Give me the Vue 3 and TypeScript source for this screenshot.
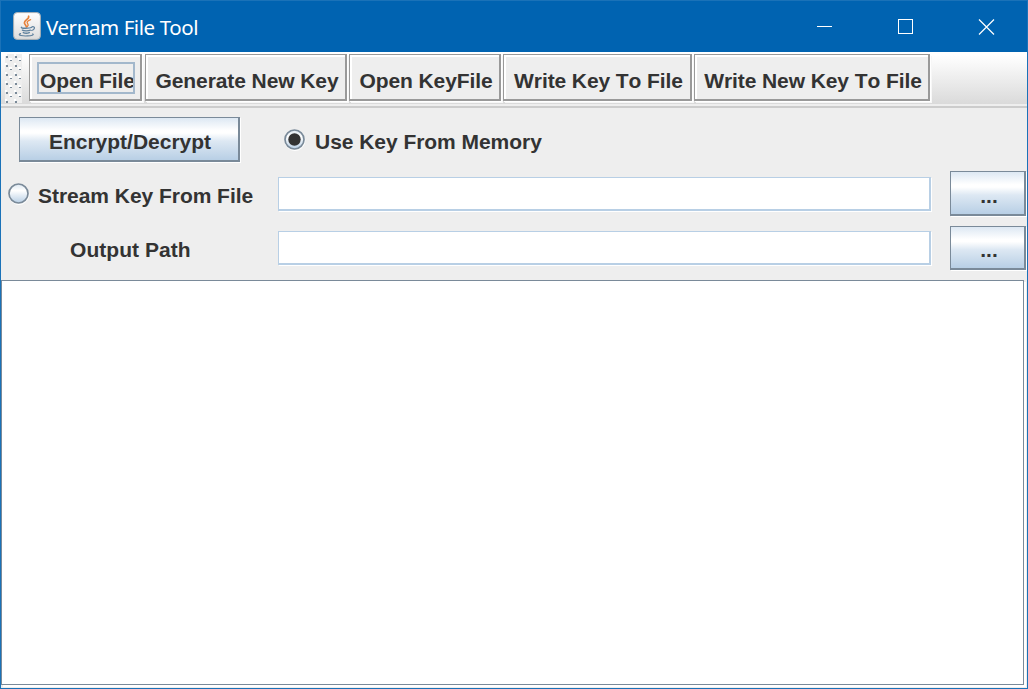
<script setup lang="ts">
import { ref } from 'vue'

const tools = [
  { label: 'Open File', width: 113, gap: 3, focused: true },
  { label: 'Generate New Key', width: 202, gap: 2, focused: false },
  { label: 'Open KeyFile', width: 152, gap: 2, focused: false },
  { label: 'Write Key To File', width: 189, gap: 2, focused: false },
  { label: 'Write New Key To File', width: 236, gap: 0, focused: false },
]
const keySource = ref<'memory' | 'file'>('memory')
const keyPath = ref('')
const outputPath = ref('')
const log = ref('')
</script>

<template>
  <div class="window">
    <header class="titlebar">
      <svg class="logo" width="28" height="28" viewBox="0 0 28 28">
        <defs>
          <linearGradient id="tile" x1="0" y1="0" x2="0" y2="1">
            <stop offset="0" stop-color="#fff" />
            <stop offset="1" stop-color="#dcdcdc" />
          </linearGradient>
        </defs>
        <rect x=".6" y=".6" width="26.8" height="26.8" rx="3.6" fill="url(#tile)" stroke="#a9b0b5" />
        <g fill="none" stroke-linecap="round">
          <path d="M15.6 4.2c1 3-4.600 3.800-4.200 6.800.2 1.500 1.900 2.200 2 4" stroke="#e6813a" stroke-width="1.700" />
          <path d="M17.600 7.600c-4 1.400-4 2.800-2.800 4.200.8 1 .3 2-.5 2.700" stroke="#e6813a" stroke-width="1.300" />
          <path d="M8.600 15.300c-2 1.200 8 1.200 9.800.2M9.400 18.200c1.500.9 6 .8 8 0M10.300 20.600c1.500.7 4.500.7 6 0" stroke="#5f819d" stroke-width="1.400" />
          <path d="M19 14.800c3.800-.8 2.800 2.900-.3 3.700" stroke="#5f819d" stroke-width="1.200" />
          <path d="M7.500 21.600c-4 1.700 3 2.600 7 2.300 4-.2 7-1 5.300-2" stroke="#5f819d" stroke-width="1.200" />
        </g>
      </svg>
      <span class="title">Vernam File Tool</span>
      <svg class="controls" width="178" height="16" viewBox="0 0 178 16" fill="none" stroke="#fff">
        <path d="M0 7.500h15" />
        <rect x="81.500" y=".5" width="14" height="14" />
        <path d="M162 .5l15 15M177 .5l-15 15" stroke-width="1.200" />
      </svg>
    </header>

    <nav class="toolbar">
      <svg class="grip" width="17" height="49">
        <defs>
          <pattern id="bumps" width="9" height="9" patternUnits="userSpaceOnUse">
            <path d="M0 0h2v2h-2zM4 4h3v2h-3z" fill="#fff" />
            <path d="M1 2h2v2h-2zM5 6h2v1h-2z" fill="#7a8a99" />
          </pattern>
        </defs>
        <rect width="17" height="49" fill="#eee" />
        <rect width="17" height="49" fill="url(#bumps)" />
      </svg>
      <button
        v-for="tool in tools"
        :key="tool.label"
        class="tool"
        :class="{ focused: tool.focused }"
        :style="{ width: tool.width + 'px', marginRight: tool.gap + 'px' }"
      >
        <span>{{ tool.label }}</span>
      </button>
    </nav>

    <main class="form">
      <button class="metal encrypt">Encrypt/Decrypt</button>
      <label class="radio memory" @click="keySource = 'memory'">
        <svg width="22" height="22" viewBox="0 0 22 22">
          <defs>
            <linearGradient id="knob" x1="0" y1="0" x2="0" y2="1">
              <stop offset="0" stop-color="#dce7f1" />
              <stop offset=".35" stop-color="#fff" />
              <stop offset="1" stop-color="#b8cfe5" />
            </linearGradient>
          </defs>
          <circle cx="11" cy="11.500" r="10" fill="none" stroke="#fff" />
          <circle cx="10.500" cy="10.500" r="9.500" fill="url(#knob)" stroke="#7a8a99" stroke-width="1.700" />
          <circle v-if="keySource === 'memory'" cx="10.500" cy="10.500" r="6.200" fill="#333" />
        </svg>
        <span>Use Key From Memory</span>
      </label>

      <label class="radio stream" @click="keySource = 'file'">
        <svg width="22" height="22" viewBox="0 0 22 22">
          <circle cx="11" cy="11.500" r="10" fill="none" stroke="#fff" />
          <circle cx="10.500" cy="10.500" r="9.500" fill="url(#knob)" stroke="#7a8a99" stroke-width="1.700" />
          <circle v-if="keySource === 'file'" cx="10.500" cy="10.500" r="6.200" fill="#333" />
        </svg>
        <span>Stream Key From File</span>
      </label>
      <input v-model="keyPath" class="field" />
      <button class="metal browse">...</button>

      <span class="caption">Output Path</span>
      <input v-model="outputPath" class="field" />
      <button class="metal browse last">...</button>
    </main>

    <textarea v-model="log" class="log"></textarea>
  </div>
</template>

<style>
body {
  margin: 0;
  overflow: hidden;
}
</style>

<style scoped>
.window {
  box-sizing: border-box;
  width: 1028px;
  height: 689px;
  display: flex;
  flex-direction: column;
  border: 1px solid #1a72b8;
  background: #eee;
  color: #333;
  font: bold 21px/24px "Liberation Sans", Arial, sans-serif;
  font-kerning: none;
}
button,
input,
textarea {
  box-sizing: border-box;
  margin: 0;
  padding: 0;
  border-radius: 0;
  outline: none;
  color: inherit;
  font: inherit;
  font-kerning: none;
}
.titlebar {
  flex: none;
  display: flex;
  align-items: center;
  height: 51px;
  box-sizing: border-box;
  padding: 0 32px 1px 12px;
  background: #0063b1;
}
.title {
  margin: 2px auto 0 5px;
  color: #fff;
  font: 20.5px/28px "Noto Sans", "Open Sans", sans-serif;
  letter-spacing: -0.42px;
}
.controls {
  display: block;
  margin-top: 2px;
}
.toolbar {
  flex: none;
  display: flex;
  box-sizing: border-box;
  height: 56px;
  padding: 2px 0 0 4px;
  border-bottom: 2px solid #ccc;
  background: linear-gradient(#fff 0, #fff 3px, #dadada 52px, #eee 52px);
}
.grip {
  margin-right: 7px;
}
.tool {
  flex: none;
  height: 47px;
  padding: 7px 0 0 3px;
  border: solid #999;
  border-width: 1px 2px 2px 1px;
  background: #eee;
  box-shadow: inset 2px 2px #fff, 1px 1px #fff, 2px 2px #f7f7f7;
  white-space: nowrap;
  letter-spacing: -0.09px;
}
.tool.focused {
  padding: 2px 0 0;
}
.focused span {
  display: block;
  box-sizing: border-box;
  width: 98px;
  height: 32px;
  margin: 0 0 0 7px;
  padding: 5px 0 0 1px;
  border: 2px solid #a3b8cc;
  text-align: left;
  overflow: hidden;
}
.form {
  flex: none;
  display: grid;
  box-sizing: border-box;
  height: 172px;
  grid-template-columns: 277px 653px 19px 76px;
  grid-template-rows: 54px 54px 54px;
  padding-top: 5px;
}
.metal {
  border: solid #7a8a99;
  border-width: 1px 2px 2px 1px;
  background: linear-gradient(#dde8f3 0, #fff 30%, #fff 36%, #dde8f3 55%, #b8cfe5 100%);
  box-shadow: 1px 1px #fff;
}
.encrypt {
  width: 221px;
  height: 45px;
  margin: 4px 0 0 18px;
  padding: 5px 0 0 2px;
}
.radio {
  display: flex;
  align-items: center;
  white-space: nowrap;
  letter-spacing: -0.04px;
}
.radio svg {
  flex: none;
}
.memory {
  grid-column: 2 / 5;
  padding-left: 6px;
}
.radio span {
  margin: 3px 0 0 9px;
}
.stream {
  padding-left: 6.5px;
}
.stream span {
  margin-left: 8.5px;
}
.caption {
  margin: 17px 0 0 69px;
  letter-spacing: 0.05px;
}
.field {
  width: 653px;
  height: 34px;
  margin-top: 10px;
  padding: 0 4px;
  border: solid #b8cfe5;
  border-width: 1px 2px 2px 1px;
  background: #fff;
  box-shadow: 1px 1px #fff;
}
.browse {
  grid-column: 4;
  width: 76px;
  height: 45px;
  margin-top: 4px;
  padding: 5px 0 0 3px;
}
.last {
  height: 44px;
  margin-top: 5px;
}
.log {
  flex: none;
  display: block;
  width: 1023px;
  height: 405px;
  border: 1px solid #7a8a99;
  background: #fff;
  box-shadow: 2px 2px #fff;
  resize: none;
}
</style>
